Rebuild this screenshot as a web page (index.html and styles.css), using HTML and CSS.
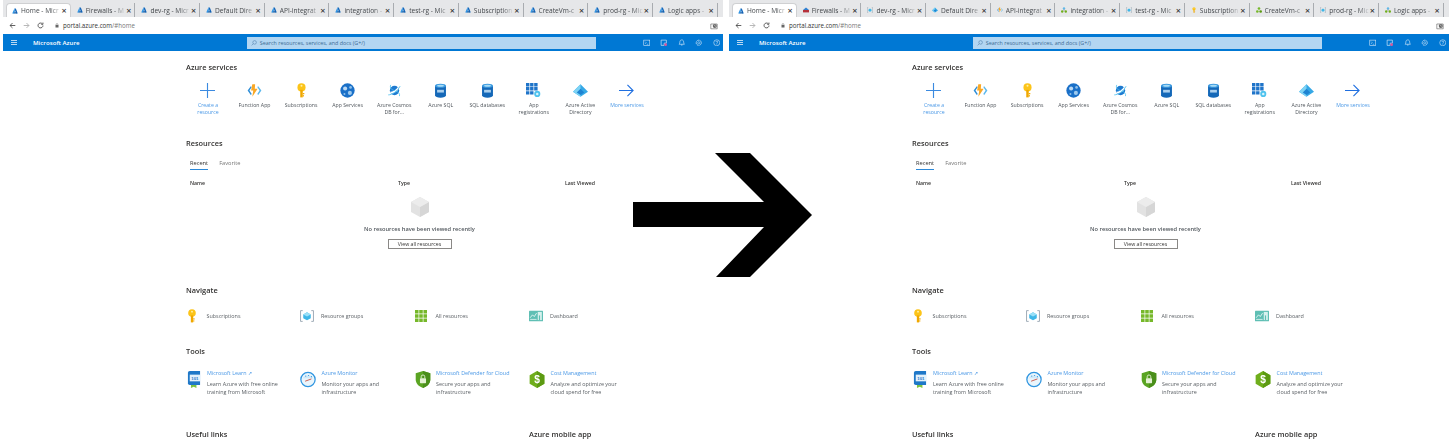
FILE: index.html
```html
<!DOCTYPE html>
<html lang="en">
<head>
    <meta charset="UTF-8">
    <title>Azure portal before and after</title>
    <link rel="stylesheet" href="styles.css">
</head>
<body>
    <svg class="defs" width="0" height="0">
        <defs>
            <symbol id="i-azure" viewBox="0 0 10 10">
                <path d="M4 1h2.400L9.600 9H6.800z" fill="#1565b8"/><path d="M4 1 .4 9h3l1.600-4z" fill="#2f94e4"/><path d="M4 7.200h3.200l.6 1.800H2.400z" fill="#0f5aa8"/>
            </symbol>
            <symbol id="i-key" viewBox="0 0 16 24">
                <circle cx="8" cy="7" r="6.500" fill="#fcc419"/><rect x="6" y="11" width="4" height="12" fill="#f0a800"/><rect x="10" y="16" width="2.500" height="2" fill="#f0a800"/><rect x="10" y="19.500" width="2" height="2" fill="#f0a800"/><circle cx="8" cy="4.500" r="1.600" fill="#fff1a8"/>
            </symbol>
            <symbol id="i-func" viewBox="0 0 24 20">
                <path d="M6 3 1 10l5 7 1.600-1.400L4 10l3.600-5.600z" fill="#2f8fd8"/><path d="M18 3l5 7-5 7-1.600-1.400L20 10l-3.600-5.600z" fill="#5cb8ec"/><path d="M13 0H8.500L6.500 10H10l-1.500 10L17 7h-4.500z" fill="#f9a825"/>
            </symbol>
            <symbol id="i-app" viewBox="0 0 22 22">
                <circle cx="11" cy="11" r="10.500" fill="#1a70c8"/><circle cx="7.500" cy="8" r="3" fill="#bcd9f3"/><circle cx="15.500" cy="6.500" r="2" fill="#8fc0ea"/><circle cx="14.500" cy="14.500" r="3" fill="#9cc9ee"/><circle cx="6.500" cy="16" r="1.500" fill="#8fc0ea"/>
            </symbol>
            <symbol id="i-cosmos" viewBox="0 0 24 24">
                <circle cx="12" cy="12" r="7.500" fill="#1d7ad0"/><path d="M5 14c4 0 10-3 13-8l1 3c-3 5-8 7-13 8z" fill="#fff"/><path d="M2 19c6 0 15-6 19-14" fill="none" stroke="#55c4f0" stroke-width="1.400"/><path d="M6 3C4 8 7 11 12 12" fill="none" stroke="#55c4f0" stroke-width="1.300"/><path d="M20 21c1-4-2-7-6-8" fill="none" stroke="#55c4f0" stroke-width="1.300"/>
            </symbol>
            <symbol id="i-sql" viewBox="0 0 18 22">
                <path d="M1 4v14c0 2 3.500 3.500 8 3.500s8-1.500 8-3.500V4z" fill="#1468b8"/><ellipse cx="9" cy="4" rx="8" ry="3" fill="#3d9be0"/><ellipse cx="9" cy="4" rx="5" ry="1.500" fill="#a8dcf5"/><rect x="4" y="10" width="10" height="4" fill="#a9cfee"/>
            </symbol>
            <symbol id="i-reg" viewBox="0 0 22 22">
                <path d="M0 0h5v5H0zM6 0h5v5H6zM12 0h5v5h-5zM0 6h5v5H0zM6 6h5v5H6zM12 6h5v5h-5zM0 12h5v5H0zM6 12h5v5H6z" fill="#1f74c9"/><circle cx="16.500" cy="16" r="4.500" fill="#4fc3ee"/><circle cx="16.500" cy="16" r="1.800" fill="#d8f3fb"/>
            </symbol>
            <symbol id="i-aad" viewBox="0 0 24 20">
                <path d="M12 0 0 12l12 8 12-8z" fill="#35a8e6"/><path d="M12 0v20L0 12z" fill="#7ed3f5"/><path d="M12 7 6 13l6 4 6-4z" fill="#1e84d2"/>
            </symbol>
            <symbol id="i-group" viewBox="0 0 26 22">
                <path d="M5 1H1v20h4M21 1h4v20h-4" fill="none" stroke="#8a99a8" stroke-width="1.500"/><path d="M13 4l7 4v7l-7 4-7-4V8z" fill="#3fb7e8"/><path d="M13 4l7 4-7 4-7-4z" fill="#9be0f7"/>
            </symbol>
            <symbol id="i-all" viewBox="0 0 22 22">
                <path d="M0 0h6.500v6.500H0zM7.750 0h6.500v6.500h-6.500zM15.500 0H22v6.500h-6.500zM0 7.750h6.500v6.500H0zM7.750 7.750h6.500v6.500h-6.500zM15.500 7.750H22v6.500h-6.500zM0 15.500h6.500V22H0zM7.750 15.500h6.500V22h-6.500zM15.500 15.500H22V22h-6.500z" fill="#76b82a"/>
            </symbol>
            <symbol id="i-dash" viewBox="0 0 24 18">
                <rect width="24" height="18" rx="1" fill="#5fbfb4"/><rect x="15" y="2" width="7" height="14" fill="#d8f1ee"/><path d="M2 12l4-5 3 3 4-6" fill="none" stroke="#fff" stroke-width="1.300"/><rect x="2" y="14" width="11" height="1.500" fill="#d8f1ee"/><rect x="17" y="8" width="2" height="8" fill="#5fbfb4"/>
            </symbol>
            <symbol id="i-learn" viewBox="0 0 20 28">
                <path d="M3 0h17v23H3a3 3 0 0 1-3-3V3a3 3 0 0 1 3-3z" fill="#1f78c8"/><rect x="3" y="6" width="17" height="11" fill="#e3f1fb"/><path d="M5 23h9v5l-4.500-2L5 28z" fill="#7dc242"/><text x="11.500" y="14.500" font-size="7" font-weight="700" text-anchor="middle" fill="#1f78c8" font-family="Liberation Sans, sans-serif">101</text>
            </symbol>
            <symbol id="i-monitor" viewBox="0 0 28 28">
                <circle cx="14" cy="14" r="12.500" fill="#e9f5fc" stroke="#2f95e0" stroke-width="2.200"/><path d="M5 12a10 10 0 0 1 18 0z" fill="#cfe9f8"/><path d="M9 17l11-4" stroke="#c0392b" stroke-width="1.400"/><circle cx="10" cy="8" r="1" fill="#2f95e0"/><circle cx="15" cy="7" r="1" fill="#2f95e0"/><circle cx="20" cy="9" r="1" fill="#2f95e0"/>
            </symbol>
            <symbol id="i-shield" viewBox="0 0 24 28">
                <path d="M12 0 24 3.500V14c0 7-5 11-12 14C5 25 0 21 0 14V3.500z" fill="#5aa422"/><path d="M12 0 24 3.500V14c0 7-5 11-12 14z" fill="#4a8f1a"/><rect x="7" y="12" width="10" height="8" rx="1" fill="#e4f2d4"/><path d="M9 12V9.500a3 3 0 0 1 6 0V12" fill="none" stroke="#e4f2d4" stroke-width="1.500"/>
            </symbol>
            <symbol id="i-cost" viewBox="0 0 26 30">
                <path d="M13 0 26 7.500v15L13 30 0 22.500v-15z" fill="#6fae1c"/><path d="M13 0 26 7.500v15L13 30z" fill="#5c9a12"/><text x="13" y="21" font-size="18" font-weight="700" text-anchor="middle" fill="#fff" font-family="Liberation Sans, sans-serif">$</text>
            </symbol>
            <symbol id="i-cube" viewBox="0 0 20 22">
                <path d="M10 0 20 5.500v11L10 22 0 16.500v-11z" fill="#e2e2e2"/><path d="M10 11 20 5.500v11L10 22z" fill="#d6d6d6"/><path d="M10 0 20 5.500 10 11 0 5.500z" fill="#ececec"/>
            </symbol>
            <symbol id="i-fire" viewBox="0 0 10 10">
                <path d="M0 5 5 1l5 4z" fill="#2f7fd0"/><rect y="5" width="10" height="4" fill="#b5303a"/>
            </symbol>
            <symbol id="i-brackets" viewBox="0 0 10 10">
                <path d="M2 1H.5v8H2M8 1h1.500v8H8" fill="none" stroke="#8a99a8" stroke-width=".8"/><path d="M5 2.500 7.500 4v2.500L5 8 2.500 6.500V4z" fill="#3fb7e8"/>
            </symbol>
            <symbol id="i-tree" viewBox="0 0 10 10">
                <circle cx="5" cy="2.500" r="2" fill="#5fb8e8"/><circle cx="2" cy="7.500" r="2" fill="#6fae1c"/><circle cx="8" cy="7.500" r="2" fill="#6fae1c"/><rect x="4.500" y="4" width="1" height="3" fill="#888"/>
            </symbol>
            <symbol id="i-vm" viewBox="0 0 10 10">
                <circle cx="5" cy="2.500" r="2.200" fill="#76b82a"/><circle cx="2.200" cy="7.500" r="2.200" fill="#76b82a"/><circle cx="7.800" cy="7.500" r="2.200" fill="#5c9a12"/>
            </symbol>
        </defs>
    </svg>

    <div class="shots">
        <section class="shot">
            <div class="tabstrip">
                <div class="tab active"><svg class="tab-ico"><use href="#i-azure"/></svg><span class="tab-name">Home - Micr</span><span class="tab-x">×</span></div>
                <div class="tab"><svg class="tab-ico"><use href="#i-azure"/></svg><span class="tab-name">Firewalls - M</span><span class="tab-x">×</span></div>
                <div class="tab"><svg class="tab-ico"><use href="#i-azure"/></svg><span class="tab-name">dev-rg - Micr</span><span class="tab-x">×</span></div>
                <div class="tab"><svg class="tab-ico"><use href="#i-azure"/></svg><span class="tab-name">Default Dire</span><span class="tab-x">×</span></div>
                <div class="tab"><svg class="tab-ico"><use href="#i-azure"/></svg><span class="tab-name">API-integrat</span><span class="tab-x">×</span></div>
                <div class="tab"><svg class="tab-ico"><use href="#i-azure"/></svg><span class="tab-name">integration -</span><span class="tab-x">×</span></div>
                <div class="tab"><svg class="tab-ico"><use href="#i-azure"/></svg><span class="tab-name">test-rg - Mic</span><span class="tab-x">×</span></div>
                <div class="tab"><svg class="tab-ico"><use href="#i-azure"/></svg><span class="tab-name">Subscription</span><span class="tab-x">×</span></div>
                <div class="tab"><svg class="tab-ico"><use href="#i-azure"/></svg><span class="tab-name">CreateVm-c</span><span class="tab-x">×</span></div>
                <div class="tab"><svg class="tab-ico"><use href="#i-azure"/></svg><span class="tab-name">prod-rg - Mic</span><span class="tab-x">×</span></div>
                <div class="tab"><svg class="tab-ico"><use href="#i-azure"/></svg><span class="tab-name">Logic apps -</span><span class="tab-x">×</span></div>
            </div>
            <div class="addressbar">
                <svg class="nav-ico" viewBox="0 0 10 10"><path d="M9 5H1.500M5 1.500 1.500 5 5 8.500" fill="none" stroke="#444" stroke-width="1.200"/></svg>
                <svg class="nav-ico" viewBox="0 0 10 10"><path d="M1 5h7.500M5 1.500 8.500 5 5 8.500" fill="none" stroke="#aaa" stroke-width="1.200"/></svg>
                <svg class="nav-ico" viewBox="0 0 10 10"><path d="M8.500 5A3.500 3.500 0 1 1 7.500 2.500M8.500 .8v2.500H6" fill="none" stroke="#444" stroke-width="1.200"/></svg>
                <div class="url"><svg class="lock" viewBox="0 0 8 10"><rect x="1" y="4" width="6" height="5" fill="#666"/><path d="M2.200 4V3a1.800 1.800 0 0 1 3.600 0v1" fill="none" stroke="#666"/></svg><span>portal.azure.com<span class="url-rest">/#home</span></span></div>
                <svg class="profile" viewBox="0 0 10 10"><path d="M1 2.500h8v6H1z" fill="none" stroke="#666" stroke-width=".8"/><circle cx="6" cy="5" r="2.600" fill="#666"/><path d="M6 3.500V5l1 .7" stroke="#fff" stroke-width=".6" fill="none"/></svg>
            </div>
            <header class="azurebar">
                <div class="burger"><i></i><i></i><i></i></div>
                <span class="brand">Microsoft Azure</span>
                <div class="search"><svg class="search-ico" viewBox="0 0 10 10"><circle cx="6" cy="4" r="3" fill="none" stroke="#3f6f9f" stroke-width=".8"/><path d="M3.800 6.200 1 9" stroke="#3f6f9f" stroke-width=".8"/></svg><span>Search resources, services, and docs (G+/)</span></div>
                <div class="bar-icons">
                    <svg viewBox="0 0 10 10"><rect x="1" y="1.500" width="8" height="7" fill="none" stroke="#d5e8f8" stroke-width=".8"/><path d="M2.800 3.500 4.300 5 2.800 6.500M5 7h2" fill="none" stroke="#d5e8f8" stroke-width=".7"/></svg>
                    <svg viewBox="0 0 10 10"><path d="M1.500 1.500h7v4h-3v3h-4z" fill="none" stroke="#d5e8f8" stroke-width=".9"/><circle cx="7.500" cy="7.500" r="1.800" fill="#e0559a"/></svg>
                    <svg viewBox="0 0 10 10"><path d="M5 1.200c-1.800 0-2.500 1.300-2.500 3 0 1.500-.8 2.300-1 2.800h7c-.2-.5-1-1.300-1-2.800 0-1.700-.7-3-2.500-3zM4 8h2" fill="none" stroke="#e6f1fb" stroke-width=".8"/></svg>
                    <svg viewBox="0 0 10 10"><circle cx="5" cy="5" r="3.400" fill="none" stroke="#d5e8f8" stroke-width="1.200" stroke-dasharray="1.500 .6"/><circle cx="5" cy="5" r="1.400" fill="none" stroke="#d5e8f8" stroke-width=".7"/></svg>
                    <svg viewBox="0 0 10 10"><circle cx="5" cy="5" r="4" fill="none" stroke="#d5e8f8" stroke-width=".8"/><path d="M3.800 4c0-1.500 2.500-1.500 2.500 0 0 1-1.300 1-1.300 2.300M5 7v.7" fill="none" stroke="#d5e8f8" stroke-width=".8"/></svg>
                </div>
            </header>
            <main class="home">
                <h2 class="heading">Azure services</h2>
                <div class="services">
                    <div class="service link"><svg class="svc-ico" viewBox="0 0 16 16"><path d="M8 0v16M0 8h16" stroke="#3b8ae0" stroke-width="1.200"/></svg><span>Create a<br>resource</span></div>
                    <div class="service"><svg class="svc-ico"><use href="#i-func"/></svg><span>Function App</span></div>
                    <div class="service"><svg class="svc-ico"><use href="#i-key"/></svg><span>Subscriptions</span></div>
                    <div class="service"><svg class="svc-ico"><use href="#i-app"/></svg><span>App Services</span></div>
                    <div class="service"><svg class="svc-ico"><use href="#i-cosmos"/></svg><span>Azure Cosmos<br>DB for...</span></div>
                    <div class="service"><svg class="svc-ico"><use href="#i-sql"/></svg><span>Azure SQL</span></div>
                    <div class="service"><svg class="svc-ico"><use href="#i-sql"/></svg><span>SQL databases</span></div>
                    <div class="service"><svg class="svc-ico"><use href="#i-reg"/></svg><span>App<br>registrations</span></div>
                    <div class="service"><svg class="svc-ico"><use href="#i-aad"/></svg><span>Azure Active<br>Directory</span></div>
                    <div class="service link"><svg class="svc-ico" viewBox="0 0 16 14"><path d="M0 7h15M9 1l6 6-6 6" fill="none" stroke="#1f6fe0" stroke-width="1.200"/></svg><span>More services</span></div>
                </div>
                <h2 class="heading res-heading">Resources</h2>
                <div class="tabs-inner"><span class="pivot on">Recent</span><span class="pivot">Favorite</span></div>
                <div class="res-cols"><b>Name</b><b>Type</b><b>Last Viewed</b></div>
                <div class="empty">
                    <svg class="cube"><use href="#i-cube"/></svg>
                    <strong>No resources have been viewed recently</strong>
                    <span class="view-btn">View all resources</span>
                </div>
                <h2 class="heading nav-heading">Navigate</h2>
                <div class="navigate">
                    <div class="nav-item"><svg class="key-ico"><use href="#i-key"/></svg><span>Subscriptions</span></div>
                    <div class="nav-item"><svg><use href="#i-group"/></svg><span>Resource groups</span></div>
                    <div class="nav-item"><svg><use href="#i-all"/></svg><span>All resources</span></div>
                    <div class="nav-item"><svg><use href="#i-dash"/></svg><span>Dashboard</span></div>
                </div>
                <h2 class="heading tools-heading">Tools</h2>
                <div class="tools">
                    <div class="tool"><svg><use href="#i-learn"/></svg><div><a>Microsoft Learn ↗</a><p>Learn Azure with free online training from Microsoft</p></div></div>
                    <div class="tool"><svg><use href="#i-monitor"/></svg><div><a>Azure Monitor</a><p>Monitor your apps and infrastructure</p></div></div>
                    <div class="tool"><svg><use href="#i-shield"/></svg><div><a>Microsoft Defender for Cloud</a><p>Secure your apps and infrastructure</p></div></div>
                    <div class="tool"><svg><use href="#i-cost"/></svg><div><a>Cost Management</a><p>Analyze and optimize your cloud spend for free</p></div></div>
                </div>
                <div class="bottom-heads"><h2 class="heading">Useful links</h2><h2 class="heading">Azure mobile app</h2></div>
            </main>
        </section>

        <section class="shot">
            <div class="tabstrip">
                <div class="tab active"><svg class="tab-ico"><use href="#i-azure"/></svg><span class="tab-name">Home - Micr</span><span class="tab-x">×</span></div>
                <div class="tab"><svg class="tab-ico"><use href="#i-fire"/></svg><span class="tab-name">Firewalls - M</span><span class="tab-x">×</span></div>
                <div class="tab"><svg class="tab-ico"><use href="#i-brackets"/></svg><span class="tab-name">dev-rg - Micr</span><span class="tab-x">×</span></div>
                <div class="tab"><svg class="tab-ico"><use href="#i-aad"/></svg><span class="tab-name">Default Dire</span><span class="tab-x">×</span></div>
                <div class="tab"><svg class="tab-ico"><use href="#i-func"/></svg><span class="tab-name">API-integrat</span><span class="tab-x">×</span></div>
                <div class="tab"><svg class="tab-ico"><use href="#i-tree"/></svg><span class="tab-name">integration -</span><span class="tab-x">×</span></div>
                <div class="tab"><svg class="tab-ico"><use href="#i-brackets"/></svg><span class="tab-name">test-rg - Mic</span><span class="tab-x">×</span></div>
                <div class="tab"><svg class="tab-ico"><use href="#i-key"/></svg><span class="tab-name">Subscription</span><span class="tab-x">×</span></div>
                <div class="tab"><svg class="tab-ico"><use href="#i-vm"/></svg><span class="tab-name">CreateVm-c</span><span class="tab-x">×</span></div>
                <div class="tab"><svg class="tab-ico"><use href="#i-brackets"/></svg><span class="tab-name">prod-rg - Mic</span><span class="tab-x">×</span></div>
                <div class="tab"><svg class="tab-ico"><use href="#i-tree"/></svg><span class="tab-name">Logic apps -</span><span class="tab-x">×</span></div>
            </div>
            <div class="addressbar">
                <svg class="nav-ico" viewBox="0 0 10 10"><path d="M9 5H1.500M5 1.500 1.500 5 5 8.500" fill="none" stroke="#444" stroke-width="1.200"/></svg>
                <svg class="nav-ico" viewBox="0 0 10 10"><path d="M1 5h7.500M5 1.500 8.500 5 5 8.500" fill="none" stroke="#aaa" stroke-width="1.200"/></svg>
                <svg class="nav-ico" viewBox="0 0 10 10"><path d="M8.500 5A3.500 3.500 0 1 1 7.500 2.500M8.500 .8v2.500H6" fill="none" stroke="#444" stroke-width="1.200"/></svg>
                <div class="url"><svg class="lock" viewBox="0 0 8 10"><rect x="1" y="4" width="6" height="5" fill="#666"/><path d="M2.200 4V3a1.800 1.800 0 0 1 3.600 0v1" fill="none" stroke="#666"/></svg><span>portal.azure.com<span class="url-rest">/#home</span></span></div>
                <svg class="profile" viewBox="0 0 10 10"><path d="M1 2.500h8v6H1z" fill="none" stroke="#666" stroke-width=".8"/><circle cx="6" cy="5" r="2.600" fill="#666"/><path d="M6 3.500V5l1 .7" stroke="#fff" stroke-width=".6" fill="none"/></svg>
            </div>
            <header class="azurebar">
                <div class="burger"><i></i><i></i><i></i></div>
                <span class="brand">Microsoft Azure</span>
                <div class="search"><svg class="search-ico" viewBox="0 0 10 10"><circle cx="6" cy="4" r="3" fill="none" stroke="#3f6f9f" stroke-width=".8"/><path d="M3.800 6.200 1 9" stroke="#3f6f9f" stroke-width=".8"/></svg><span>Search resources, services, and docs (G+/)</span></div>
                <div class="bar-icons">
                    <svg viewBox="0 0 10 10"><rect x="1" y="1.500" width="8" height="7" fill="none" stroke="#d5e8f8" stroke-width=".8"/><path d="M2.800 3.500 4.300 5 2.800 6.500M5 7h2" fill="none" stroke="#d5e8f8" stroke-width=".7"/></svg>
                    <svg viewBox="0 0 10 10"><path d="M1.500 1.500h7v4h-3v3h-4z" fill="none" stroke="#d5e8f8" stroke-width=".9"/><circle cx="7.500" cy="7.500" r="1.800" fill="#e0559a"/></svg>
                    <svg viewBox="0 0 10 10"><path d="M5 1.200c-1.800 0-2.500 1.300-2.500 3 0 1.500-.8 2.300-1 2.800h7c-.2-.5-1-1.300-1-2.800 0-1.700-.7-3-2.500-3zM4 8h2" fill="none" stroke="#e6f1fb" stroke-width=".8"/></svg>
                    <svg viewBox="0 0 10 10"><circle cx="5" cy="5" r="3.400" fill="none" stroke="#d5e8f8" stroke-width="1.200" stroke-dasharray="1.500 .6"/><circle cx="5" cy="5" r="1.400" fill="none" stroke="#d5e8f8" stroke-width=".7"/></svg>
                    <svg viewBox="0 0 10 10"><circle cx="5" cy="5" r="4" fill="none" stroke="#d5e8f8" stroke-width=".8"/><path d="M3.800 4c0-1.500 2.500-1.500 2.500 0 0 1-1.300 1-1.300 2.300M5 7v.7" fill="none" stroke="#d5e8f8" stroke-width=".8"/></svg>
                </div>
            </header>
            <main class="home">
                <h2 class="heading">Azure services</h2>
                <div class="services">
                    <div class="service link"><svg class="svc-ico" viewBox="0 0 16 16"><path d="M8 0v16M0 8h16" stroke="#3b8ae0" stroke-width="1.200"/></svg><span>Create a<br>resource</span></div>
                    <div class="service"><svg class="svc-ico"><use href="#i-func"/></svg><span>Function App</span></div>
                    <div class="service"><svg class="svc-ico"><use href="#i-key"/></svg><span>Subscriptions</span></div>
                    <div class="service"><svg class="svc-ico"><use href="#i-app"/></svg><span>App Services</span></div>
                    <div class="service"><svg class="svc-ico"><use href="#i-cosmos"/></svg><span>Azure Cosmos<br>DB for...</span></div>
                    <div class="service"><svg class="svc-ico"><use href="#i-sql"/></svg><span>Azure SQL</span></div>
                    <div class="service"><svg class="svc-ico"><use href="#i-sql"/></svg><span>SQL databases</span></div>
                    <div class="service"><svg class="svc-ico"><use href="#i-reg"/></svg><span>App<br>registrations</span></div>
                    <div class="service"><svg class="svc-ico"><use href="#i-aad"/></svg><span>Azure Active<br>Directory</span></div>
                    <div class="service link"><svg class="svc-ico" viewBox="0 0 16 14"><path d="M0 7h15M9 1l6 6-6 6" fill="none" stroke="#1f6fe0" stroke-width="1.200"/></svg><span>More services</span></div>
                </div>
                <h2 class="heading res-heading">Resources</h2>
                <div class="tabs-inner"><span class="pivot on">Recent</span><span class="pivot">Favorite</span></div>
                <div class="res-cols"><b>Name</b><b>Type</b><b>Last Viewed</b></div>
                <div class="empty">
                    <svg class="cube"><use href="#i-cube"/></svg>
                    <strong>No resources have been viewed recently</strong>
                    <span class="view-btn">View all resources</span>
                </div>
                <h2 class="heading nav-heading">Navigate</h2>
                <div class="navigate">
                    <div class="nav-item"><svg class="key-ico"><use href="#i-key"/></svg><span>Subscriptions</span></div>
                    <div class="nav-item"><svg><use href="#i-group"/></svg><span>Resource groups</span></div>
                    <div class="nav-item"><svg><use href="#i-all"/></svg><span>All resources</span></div>
                    <div class="nav-item"><svg><use href="#i-dash"/></svg><span>Dashboard</span></div>
                </div>
                <h2 class="heading tools-heading">Tools</h2>
                <div class="tools">
                    <div class="tool"><svg><use href="#i-learn"/></svg><div><a>Microsoft Learn ↗</a><p>Learn Azure with free online training from Microsoft</p></div></div>
                    <div class="tool"><svg><use href="#i-monitor"/></svg><div><a>Azure Monitor</a><p>Monitor your apps and infrastructure</p></div></div>
                    <div class="tool"><svg><use href="#i-shield"/></svg><div><a>Microsoft Defender for Cloud</a><p>Secure your apps and infrastructure</p></div></div>
                    <div class="tool"><svg><use href="#i-cost"/></svg><div><a>Cost Management</a><p>Analyze and optimize your cloud spend for free</p></div></div>
                </div>
                <div class="bottom-heads"><h2 class="heading">Useful links</h2><h2 class="heading">Azure mobile app</h2></div>
            </main>
        </section>
    </div>

    <svg class="big-arrow" viewBox="0 0 180 124"><polygon points="82,0 117,0 179,62 117,124 83,124 131,74 0,74 0,49 131,49"/></svg>
</body>
</html>
```

FILE: styles.css
```css
html, body {
    margin: 0;
    height: 100%;
    background: #fff;
    overflow: hidden;
}
body {
    font-family: "Open Sans", "Noto Sans", sans-serif;
    color: #323130;
}
.defs {
    position: absolute;
}
.shots {
    display: flex;
    gap: 6px;
    padding-left: 3px;
}
.shot {
    width: 720px;
    height: 440px;
    overflow: hidden;
    flex: none;
    filter: blur(.4px);
}

/* browser chrome */
.tabstrip {
    height: 17px;
    padding: 3px 0 0 3px;
    box-sizing: border-box;
    display: flex;
    background: #e6e7e9;
}
.tab {
    width: 64.7px;
    height: 14px;
    flex: none;
    box-sizing: border-box;
    display: flex;
    align-items: center;
    padding: 0 3px 0 6px;
    font-size: 6.6px;
    color: #45494d;
    border-right: 1px solid #a9acb0;
}
.tab.active {
    background: #fff;
    border: 1px solid #cfd0d2;
    border-bottom: 0;
    border-radius: 4px 4px 0 0;
    padding-left: 5px;
}
.tab-ico {
    width: 6px;
    height: 6px;
    flex: none;
    margin-right: 3px;
}
.tab-name {
    flex: 1;
    min-width: 0;
    white-space: nowrap;
    -webkit-mask-image: linear-gradient(90deg, #000 72%, transparent);
    mask-image: linear-gradient(90deg, #000 72%, transparent);
}
.tab-x {
    font-size: 9px;
    font-weight: 600;
    line-height: 1;
    color: #333;
}
.addressbar {
    height: 17px;
    display: flex;
    align-items: center;
    background: #fff;
    padding: 0 5px 0 6px;
}
.nav-ico {
    width: 7px;
    height: 7px;
    margin-right: 7px;
}
.url {
    flex: 1;
    display: flex;
    align-items: center;
    gap: 4px;
    font-size: 6.2px;
    color: #333;
    margin-left: 4px;
}
.lock {
    width: 4px;
    height: 5px;
}
.url-rest {
    color: #777;
}
.profile {
    width: 8px;
    height: 8px;
}

/* portal header */
.azurebar {
    height: 17px;
    background: #0078d4;
    display: flex;
    align-items: center;
    padding: 0 3px 0 7.5px;
    color: #fff;
}
.burger {
    width: 6px;
    display: flex;
    flex-direction: column;
    gap: 1px;
    margin-right: 16.5px;
}
.burger i {
    display: block;
    height: 1px;
    background: #b9d8f2;
}
.brand {
    width: 214px;
    font-size: 6.1px;
    font-weight: 600;
}
.search {
    width: 349px;
    height: 12px;
    box-sizing: border-box;
    background: #b3d6f2;
    color: #3c6a94;
    font-size: 5.4px;
    display: flex;
    align-items: center;
    padding-left: 4px;
    gap: 3px;
}
.search-ico {
    width: 6px;
    height: 6px;
}
.bar-icons {
    display: flex;
    gap: 10px;
    margin-left: 47px;
}
.bar-icons svg {
    width: 7.5px;
    height: 7.5px;
}

/* home page */
.home {
    padding-left: 183px;
    width: 425px;
}
.heading {
    margin: 0;
    font-size: 7.4px;
    line-height: 10px;
    font-weight: 600;
    color: #323130;
}
.home > .heading:first-child {
    padding-top: 11px;
}
.services {
    display: flex;
    margin: 11px 0 0 -1.3px;
    height: 48px;
}
.service {
    width: 46.55px;
    flex: none;
    display: flex;
    flex-direction: column;
    align-items: center;
    font-size: 5.2px;
    line-height: 7.4px;
    text-align: center;
    color: #50565c;
}
.service.link {
    color: #4a98e6;
}
.svc-ico {
    width: 15px;
    height: 15px;
    margin-bottom: 4px;
}
.res-heading {
    margin-top: 7px;
}
.tabs-inner {
    display: flex;
    gap: 11px;
    margin: 12px 0 0 4px;
    font-size: 5.7px;
    line-height: 7px;
    color: #777;
}
.pivot {
    padding-bottom: 2px;
}
.pivot.on {
    color: #323130;
    font-weight: 500;
    border-bottom: 1px solid #2b88d8;
}
.res-cols {
    display: grid;
    grid-template-columns: 208px 167px 50px;
    margin: 9.5px 0 0 4px;
    font-size: 5.2px;
    line-height: 7px;
}
.res-cols b {
    font-weight: 600;
}
.empty {
    display: flex;
    flex-direction: column;
    align-items: center;
    margin-top: 10.5px;
    width: 467px;
}
.cube {
    width: 18px;
    height: 20px;
}
.empty strong {
    margin-top: 9px;
    font-size: 5.7px;
    line-height: 7px;
    font-weight: 600;
    color: #50565c;
}
.view-btn {
    margin-top: 6px;
    width: 64px;
    height: 10px;
    box-sizing: border-box;
    border: 1px solid #8a8886;
    text-align: center;
    font-size: 5.2px;
    line-height: 8px;
    color: #323130;
}
.nav-heading {
    margin-top: 36px;
}
.navigate {
    display: grid;
    grid-template-columns: repeat(4, 114.5px);
    margin: 14px 0 0 -1px;
}
.nav-item {
    display: flex;
    align-items: center;
    gap: 7.5px;
    font-size: 5.4px;
    color: #5a5f64;
}
.nav-item svg {
    width: 14px;
    height: 12px;
    flex: none;
}
.nav-item .key-ico {
    height: 14px;
}
.tools-heading {
    margin-top: 23px;
}
.tools {
    display: grid;
    grid-template-columns: repeat(4, 114.5px);
    margin: 14px 0 0 -.5px;
}
.tool {
    display: flex;
    gap: 5.5px;
}
.tool svg {
    width: 16px;
    height: 17px;
    flex: none;
    margin-top: 1px;
}
.tool a {
    display: block;
    font-size: 5.4px;
    line-height: 7px;
    color: #4a98e6;
    white-space: nowrap;
}
.tool p {
    margin: 3px 0 0;
    font-size: 5.4px;
    line-height: 8px;
    color: #5a5f64;
    width: 78px;
}
.bottom-heads {
    display: grid;
    grid-template-columns: 343px 100px;
    margin-top: 33px;
}

.big-arrow {
    position: absolute;
    left: 633px;
    top: 153px;
    width: 180px;
    height: 124px;
}
```
